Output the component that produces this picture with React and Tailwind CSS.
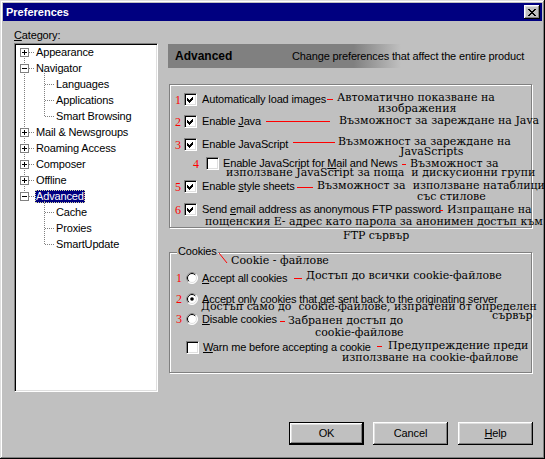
import React from "react";

const raised =
  "shadow-[inset_-1px_-1px_0_#000,inset_1px_1px_0_#fff,inset_-2px_-2px_0_#808080,inset_2px_2px_0_#dfdfdf]";
const sunken =
  "border border-t-[#808080] border-l-[#808080] border-b-white border-r-white shadow-[inset_1px_1px_0_#000,inset_-1px_-1px_0_#dfdfdf]";
const etched = "border border-[#808080] shadow-[inset_1px_1px_0_#fff,1px_1px_0_#fff]";

const tree = [
  { label: "Appearance", level: 0, box: "+" },
  { label: "Navigator", level: 0, box: "-" },
  { label: "Languages", level: 1 },
  { label: "Applications", level: 1 },
  { label: "Smart Browsing", level: 1 },
  { label: "Mail & Newsgroups", level: 0, box: "+" },
  { label: "Roaming Access", level: 0, box: "+" },
  { label: "Composer", level: 0, box: "+" },
  { label: "Offline", level: 0, box: "+" },
  { label: "Advanced", level: 0, box: "-", selected: true },
  { label: "Cache", level: 1 },
  { label: "Proxies", level: 1 },
  { label: "SmartUpdate", level: 1 },
];

// Bulgarian notes pasted over the dialog
const notes = [
  ["Автоматично показване на", "left-[337px] top-[92px]"],
  ["изображения", "left-[378px] top-[103px]"],
  ["Възможност за зареждане на Java", "left-[339px] top-[115px]"],
  ["Възможност за зареждане на", "left-[338px] top-[136px]"],
  ["JavaScripts", "left-[400px] top-[146px]"],
  ["Възможност за", "left-[410px] top-[158px]"],
  ["използване JavaScript за поща  и дискусионни групи", "left-[226px] top-[167px]"],
  ["Възможност за  използване натаблици", "left-[317px] top-[180px]"],
  ["със стилове", "left-[417px] top-[191px]"],
  ["Изпращане на", "left-[447px] top-[204px]"],
  ["пощенския Е- адрес като парола за анонимен достъп към", "left-[205px] top-[216px]"],
  ["FTP сървър", "left-[343px] top-[230px]"],
  ["Cookie - файлове", "left-[231px] top-[255px]"],
  ["Достъп до всички cookie-файлове", "left-[306px] top-[270px]"],
  ["Достъп само до  cookie-файлове, изпратени от определен", "left-[201px] top-[301px]"],
  ["сървър", "left-[492px] top-[310px]"],
  ["Забранен достъп до", "left-[288px] top-[315px]"],
  ["cookie-файлове", "left-[315px] top-[327px]"],
  ["Предупреждение преди", "left-[388px] top-[340px]"],
  ["използване на cookie-файлове", "left-[342px] top-[352px]"],
];

const dashes = [
  "left-[327px] top-[99px] w-[6px]",
  "left-[266px] top-[121px] w-[64px]",
  "left-[293px] top-[142px] w-[42px]",
  "left-[402px] top-[164px] w-[4px]",
  "left-[297px] top-[187px] w-[16px]",
  "left-[439px] top-[210px] w-[4px]",
  "left-[294px] top-[278px] w-[8px]",
  "left-[280px] top-[321px] w-[5px]",
  "left-[377px] top-[346px] w-[5px]",
];

function CheckBox({ checked }) {
  return (
    <span className={"relative block w-[13px] h-[13px] shrink-0 bg-white " + sunken}>
      {checked ? (
        <svg className="absolute left-[1px] top-[1px]" width="9" height="9" viewBox="0 0 9 9" shapeRendering="crispEdges">
          <polygon points="1,3 3,5 7,1 7,4 3,8 1,6" fill="#000" />
        </svg>
      ) : null}
    </span>
  );
}

function Radio({ checked }) {
  return (
    <svg className="block shrink-0" width="12" height="12" viewBox="0 0 12 12">
      <circle cx="6" cy="6" r="5.5" fill="#fff" stroke="#fff" />
      <path d="M2.1 9.9 A5.5 5.5 0 0 1 9.9 2.1" fill="none" stroke="#808080" />
      <circle cx="6" cy="6" r="4.5" fill="#fff" stroke="#dfdfdf" />
      <path d="M2.8 9.2 A4.5 4.5 0 0 1 9.2 2.8" fill="none" stroke="#000" />
      {checked ? <circle cx="6" cy="6" r="1.8" fill="#000" /> : null}
    </svg>
  );
}

function Num({ children, w = "w-[9px]" }) {
  return (
    <span className={w + " shrink-0 font-['Liberation_Serif',serif] text-[12px] leading-[12px] tracking-normal text-[#ff0000]"}>
      {children}
    </span>
  );
}

function U({ children }) {
  return <span className="underline underline-offset-[1px]">{children}</span>;
}

function Button({ children, def }) {
  return (
    <button
      className={
        "w-[75px] h-[23px] bg-[#c0c0c0] text-[11px] text-black flex items-center justify-center " +
        (def ? "border border-black " : "") +
        raised
      }
    >
      {children}
    </button>
  );
}

function TreeLines() {
  const box = (i, sign) => {
    const y = 16 * i + 4.5;
    const c = 16 * i + 8.5;
    return (
      <g key={i}>
        <rect x="5.5" y={y} width="8" height="8" fill="#fff" stroke="#808080" />
        <line x1="7" y1={c} x2="12" y2={c} stroke="#000" />
        {sign === "+" ? <line x1="9.5" y1={c - 2.5} x2="9.5" y2={c + 2.5} stroke="#000" /> : null}
      </g>
    );
  };
  return (
    <svg className="absolute left-0 top-0" width="60" height="220" shapeRendering="crispEdges">
      <g stroke="#808080" strokeDasharray="1 1">
        <line x1="9.5" y1="8" x2="9.5" y2="152" />
        <line x1="29.5" y1="25" x2="29.5" y2="73" />
        <line x1="29.5" y1="153" x2="29.5" y2="201" />
        {tree.map((t, i) =>
          t.level === 0 ? (
            <line key={i} x1="14" y1={16 * i + 8.5} x2="20" y2={16 * i + 8.5} />
          ) : (
            <line key={i} x1="30" y1={16 * i + 8.5} x2="40" y2={16 * i + 8.5} />
          )
        )}
      </g>
      {tree.map((t, i) => (t.box ? box(i, t.box) : null))}
    </svg>
  );
}

export default function App() {
  return (
    <div className="relative w-[545px] h-[459px] bg-[#c0c0c0] p-[3px] font-['Liberation_Sans',Arial,sans-serif] text-[11px] tracking-[-0.15px] text-black shadow-[inset_-1px_-1px_0_#000,inset_1px_1px_0_#dfdfdf,inset_-2px_-2px_0_#808080,inset_2px_2px_0_#fff]">
      {/* title bar */}
      <div className="h-[18px] bg-[#000080] flex items-center justify-between pl-[3px] pr-[2px]">
        <span className="text-white font-bold text-[11px] tracking-normal">Preferences</span>
        <span className={"w-[16px] h-[14px] bg-[#c0c0c0] flex items-center justify-center " + raised}>
          <svg width="8" height="7" viewBox="0 0 8 7" shapeRendering="crispEdges">
            <path d="M0 0h2v1h1v1h2V1h1V0h2v1H7v1H6v1H5v1h1v1h1v1h1v1H6V6H5V5H3v1H2v1H0V6h1V5h1V4h1V3H2V2H1V1H0z" fill="#000" />
          </svg>
        </span>
      </div>

      {/* body */}
      <div className="h-[371px] flex pl-[11px]">
        <div className="w-[144px] pt-[8px]">
          <div className="leading-[13px]">
            <U>C</U>ategory:
          </div>
          <div className={"relative mt-[1px] h-[349px] bg-white " + sunken}>
            <div className="relative">
              <TreeLines />
              {tree.map((t, i) => (
                <div key={i} className={"h-[16px] flex items-center whitespace-nowrap " + (t.level ? "pl-[41px]" : "pl-[21px]")}>
                  {t.selected ? (
                    <span className="-ml-[1px] bg-[#000080] text-white border border-dotted border-[#d8d8a0] leading-[11px]">
                      {t.label}
                    </span>
                  ) : (
                    <span>{t.label}</span>
                  )}
                </div>
              ))}
            </div>
          </div>
        </div>

        <div className="ml-[10px] pt-[23px] w-[364px]">
          <div className="h-[24px] bg-[linear-gradient(90deg,#808080_51%,#c0c0c0_64%)] flex items-center whitespace-nowrap">
            <span className="pl-[7px] w-[124px] font-bold text-[12px] tracking-normal">Advanced</span>
            <span>Change preferences that affect the entire product</span>
          </div>

          <div className={"ml-[1px] mt-[16px] w-[363px] h-[144px] pt-[8px] " + etched}>
            <div className="h-[13px] flex items-center pl-[5px] whitespace-nowrap">
              <Num>1</Num>
              <CheckBox checked />
              <span className="ml-[5px]">Automatically load images</span>
            </div>
            <div className="mt-[9px] h-[13px] flex items-center pl-[5px] whitespace-nowrap">
              <Num>2</Num>
              <CheckBox checked />
              <span className="ml-[5px]">
                Enable <U>J</U>ava
              </span>
            </div>
            <div className="mt-[10px] h-[13px] flex items-center pl-[5px] whitespace-nowrap">
              <Num>3</Num>
              <CheckBox checked />
              <span className="ml-[5px]">Enable JavaScript</span>
            </div>
            <div className="mt-[6px] h-[13px] flex items-center pl-[23px] whitespace-nowrap">
              <Num w="w-[13px]">4</Num>
              <CheckBox />
              <span className="ml-[4px]">
                Enable JavaScript for <U>M</U>ail and News
              </span>
            </div>
            <div className="mt-[10px] h-[13px] flex items-center pl-[5px] whitespace-nowrap">
              <Num>5</Num>
              <CheckBox checked />
              <span className="ml-[5px]">
                Enable <U>s</U>tyle sheets
              </span>
            </div>
            <div className="mt-[10px] h-[13px] flex items-center pl-[5px] whitespace-nowrap">
              <Num>6</Num>
              <CheckBox checked />
              <span className="ml-[5px]">
                Send <U>e</U>mail address as anonymous FTP password
              </span>
            </div>
          </div>

          <div className={"relative ml-[1px] mt-[24px] w-[363px] h-[121px] pt-[19px] " + etched}>
            <span className="absolute left-[7px] top-[-8px] px-[1px] bg-[#c0c0c0] leading-[13px]">Cookies</span>
            <div className="h-[12px] flex items-center pl-[6px] whitespace-nowrap">
              <Num w="w-[10px]">1</Num>
              <Radio />
              <span className="ml-[4px]">
                <U>A</U>ccept all cookies
              </span>
            </div>
            <div className="mt-[9px] h-[12px] flex items-center pl-[6px] whitespace-nowrap">
              <Num w="w-[10px]">2</Num>
              <Radio checked />
              <span className="ml-[4px]">
                Accept <U>o</U>nly cookies that get sent back to the originating server
              </span>
            </div>
            <div className="mt-[8px] h-[12px] flex items-center pl-[6px] whitespace-nowrap">
              <Num w="w-[10px]">3</Num>
              <Radio />
              <span className="ml-[4px]">
                <U>D</U>isable cookies
              </span>
            </div>
            <div className="mt-[16px] h-[13px] flex items-center pl-[16px] whitespace-nowrap">
              <CheckBox />
              <span className="ml-[4px]">
                <U>W</U>arn me before accepting a cookie
              </span>
            </div>
          </div>
        </div>
      </div>

      {/* buttons */}
      <div className="mt-[30px] flex justify-end pr-[9px]">
        <Button def>OK</Button>
        <div className="ml-[9px]">
          <Button>Cancel</Button>
        </div>
        <div className="ml-[10px]">
          <Button>
            <U>H</U>elp
          </Button>
        </div>
      </div>

      {/* annotations */}
      {notes.map(([t, pos], i) => (
        <span
          key={i}
          className={"absolute whitespace-pre font-['DejaVu_Serif',serif] text-[11px] leading-[12px] tracking-normal text-black " + pos}
        >
          {t}
        </span>
      ))}
      {dashes.map((pos, i) => (
        <span key={i} className={"absolute h-px bg-[#ff0000] " + pos} />
      ))}
      <svg className="absolute left-[218px] top-[252px]" width="10" height="12">
        <line x1="1" y1="1" x2="9" y2="11" stroke="#ff0000" />
      </svg>
    </div>
  );
}
